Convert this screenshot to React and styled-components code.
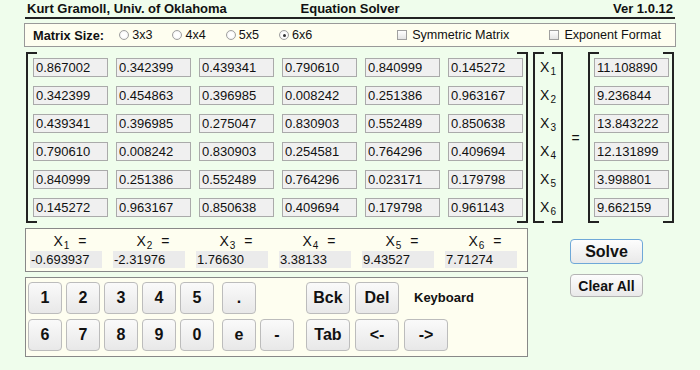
import React from 'react'
import styled, { createGlobalStyle } from 'styled-components'

const Global = createGlobalStyle`
  html, body {
    margin: 0;
    padding: 0;
    background: #effdec;
  }
  body {
    font-family: "Liberation Sans", Arial, sans-serif;
    color: #111;
  }
`;

const Page = styled.div`
  width: 650px;
  height: 370px;
  padding: 0 25px;
  display: flex;
  flex-direction: column;
`;

const Header = styled.div`
  display: grid;
  grid-template-columns: 1fr auto 1fr;
  align-items: center;
  height: 17px;
  padding: 0 2px;
  border-bottom: 2px solid #222;
  font-size: 13px;
  font-weight: bold;
  span:last-child { text-align: right; }
`;

const Options = styled.div`
  margin: 4px -1px 0 -1px;
  height: 22px;
  border: 1px solid #999;
  background: #fefef0;
  display: flex;
  align-items: center;
  padding: 0 14px 0 8px;
  font-size: 12.6px;
`;

const Label = styled.span`
  font-weight: bold;
  font-size: 12.8px;
  margin-right: 15px;
`;

const Choice = styled.span`
  display: flex;
  align-items: center;
  gap: 3px;
  margin-right: ${p => p.$gap ?? 20}px;
  margin-left: ${p => p.$push ? 'auto' : '0'};
`;

const Radio = styled.span`
  width: 8px;
  height: 8px;
  border-radius: 50%;
  border: 1px solid #a0a0a0;
  background: radial-gradient(circle, #fff 40%, #e6e6e6);
  display: flex;
  align-items: center;
  justify-content: center;
  &::after {
    content: '';
    width: 3px;
    height: 3px;
    border-radius: 50%;
    background: ${p => p.$on ? '#333' : 'transparent'};
  }
`;

const Check = styled.span`
  width: 8px;
  height: 8px;
  border: 1px solid #a0a0a0;
  background: linear-gradient(#fff, #e4e4e4);
  margin-right: 2px;
`;

const MatrixRow = styled.div`
  display: flex;
  margin-top: 5px;
  height: 171px;
`;

const Bracket = styled.div`
  position: relative;
  padding: ${p => p.$pad || '6px 5px 6px 7px'};
  width: ${p => p.$w}px;
  box-sizing: border-box;
  margin-left: ${p => p.$ml || 0}px;
  &::before, &::after {
    content: '';
    position: absolute;
    top: 0;
    bottom: 0;
    width: 9px;
    border: 2px solid #222;
  }
  &::before { left: 0; border-right: none; }
  &::after { right: 0; border-left: none; }
`;

const Grid = styled.div`
  display: grid;
  grid-template-columns: repeat(${p => p.$cols}, 75px);
  grid-auto-rows: 19px;
  column-gap: 8px;
  row-gap: 9px;
`;

const Cell = styled.input`
  box-sizing: border-box;
  width: 75px;
  height: 19px;
  margin: 0;
  padding: 0 2px;
  border: 1px solid #aaa;
  background: #f0f0f0;
  font-family: "Liberation Sans", Arial, sans-serif;
  font-size: 13px;
  color: #111;
  outline: none;
`;

const VarList = styled.div`
  display: grid;
  grid-auto-rows: 19px;
  row-gap: 9px;
  justify-items: center;
  align-items: center;
`;

const Var = styled.span`
  font-size: 14px;
  sub {
    font-size: 10px;
    vertical-align: -3px;
    margin-left: 1px;
  }
`;

const Equals = styled.div`
  width: 25px;
  display: flex;
  align-items: center;
  justify-content: center;
  font-size: 14px;
`;

const Bottom = styled.div`
  display: flex;
  margin-top: 5px;
`;

const LeftCol = styled.div`
  width: 503px;
  display: flex;
  flex-direction: column;
  gap: 5px;
`;

const Panel = styled.div`
  border: 1px solid #888;
  background: #fefef0;
  box-sizing: border-box;
  height: ${p => p.$h}px;
  padding: ${p => p.$pad};
`;

const Results = styled.div`
  display: grid;
  grid-template-columns: repeat(6, 72px);
  column-gap: 11px;
`;

const ResultCell = styled.div`
  display: flex;
  flex-direction: column;
`;

const ResultLabel = styled.div`
  height: 19px;
  line-height: 19px;
  text-align: center;
  font-size: 14px;
  padding-left: 8px;
  white-space: nowrap;
  sub {
    font-size: 10px;
    vertical-align: -3px;
    margin: 0 9px 0 1px;
  }
`;

const ResultValue = styled.div`
  height: 17px;
  background: #ebebeb;
  font-size: 13px;
  line-height: 17px;
  padding-left: 1px;
`;

const KeyRows = styled.div`
  display: flex;
  flex-direction: column;
  gap: 5px;
`;

const KeyRow = styled.div`
  display: flex;
  align-items: center;
`;

const KeyGroup = styled.div`
  display: flex;
  gap: ${p => p.$gap || 4}px;
  margin-left: ${p => p.$ml || 0}px;
  align-items: center;
`;

const Key = styled.button`
  box-sizing: border-box;
  width: ${p => p.$w || 34}px;
  height: 32px;
  margin: 0;
  padding: 0;
  border: 1px solid #bcbcbc;
  border-radius: 4px;
  background: linear-gradient(#fafafa, #e8e8e8);
  font-family: "Liberation Sans", Arial, sans-serif;
  font-weight: bold;
  font-size: 16px;
  color: #111;
  visibility: ${p => p.$blank ? 'hidden' : 'visible'};
`;

const KeyLabel = styled.span`
  font-size: 13px;
  font-weight: bold;
  margin-left: 10px;
  margin-top: -2px;
`;

const Actions = styled.div`
  display: flex;
  flex-direction: column;
  gap: 10px;
  margin-left: 42px;
  padding-top: 11px;
`;

const Action = styled.button`
  box-sizing: border-box;
  width: 73px;
  height: ${p => p.$primary ? 25 : 23}px;
  border: 1px solid ${p => p.$primary ? '#6fa8d8' : '#b4b4b4'};
  border-radius: 4px;
  background: linear-gradient(#fdfdfd, #e9e9e9);
  font-family: "Liberation Sans", Arial, sans-serif;
  font-weight: bold;
  font-size: ${p => p.$primary ? 16 : 14}px;
  color: #111;
  padding: 0;
`;

const matrix = [
  ['0.867002', '0.342399', '0.439341', '0.790610', '0.840999', '0.145272'],
  ['0.342399', '0.454863', '0.396985', '0.008242', '0.251386', '0.963167'],
  ['0.439341', '0.396985', '0.275047', '0.830903', '0.552489', '0.850638'],
  ['0.790610', '0.008242', '0.830903', '0.254581', '0.764296', '0.409694'],
  ['0.840999', '0.251386', '0.552489', '0.764296', '0.023171', '0.179798'],
  ['0.145272', '0.963167', '0.850638', '0.409694', '0.179798', '0.961143'],
];
const rhs = ['11.108890', '9.236844', '13.843222', '12.131899', '3.998801', '9.662159'];
const answers = ['-0.693937', '-2.31976', '1.76630', '3.38133', '9.43527', '7.71274'];

export default function App() {
  return (
    <>
      <Global />
      <Page>
        <Header>
          <span>Kurt Gramoll, Univ. of Oklahoma</span>
          <span>Equation Solver</span>
          <span>Ver 1.0.12</span>
        </Header>

        <Options>
          <Label>Matrix Size:</Label>
          {['3x3', '4x4', '5x5', '6x6'].map(s => (
            <Choice key={s}>
              <Radio $on={s === '6x6'} />
              {s}
            </Choice>
          ))}
          <Choice $push $gap={40}>
            <Check />
            Symmetric Matrix
          </Choice>
          <Choice $gap={0}>
            <Check />
            Exponent Format
          </Choice>
        </Options>

        <MatrixRow>
          <Bracket $w={502} $ml={1}>
            <Grid $cols={6}>
              {matrix.flat().map((v, i) => (
                <Cell key={i} readOnly value={v} />
              ))}
            </Grid>
          </Bracket>
          <Bracket $w={30} $ml={5} $pad="6px 0">
            <VarList>
              {[1, 2, 3, 4, 5, 6].map(n => (
                <Var key={n}>X<sub>{n}</sub></Var>
              ))}
            </VarList>
          </Bracket>
          <Equals>=</Equals>
          <Bracket $w={86} $pad="6px 5px 6px 6px">
            <Grid $cols={1}>
              {rhs.map((v, i) => (
                <Cell key={i} readOnly value={v} />
              ))}
            </Grid>
          </Bracket>
        </MatrixRow>

        <Bottom>
          <LeftCol>
            <Panel $h={44} $pad="3px 0 0 4px">
              <Results>
                {answers.map((v, i) => (
                  <ResultCell key={i}>
                    <ResultLabel>X<sub>{i + 1}</sub>=</ResultLabel>
                    <ResultValue>{v}</ResultValue>
                  </ResultCell>
                ))}
              </Results>
            </Panel>
            <Panel $h={80} $pad="4px 2px">
              <KeyRows>
                <KeyRow>
                  <KeyGroup>
                    {['1', '2', '3', '4', '5'].map(k => <Key key={k}>{k}</Key>)}
                  </KeyGroup>
                  <KeyGroup $ml={8}>
                    <Key>.</Key>
                    <Key $blank />
                  </KeyGroup>
                  <KeyGroup $ml={12} $gap={5}>
                    <Key $w={44}>Bck</Key>
                    <Key $w={44}>Del</Key>
                    <KeyLabel>Keyboard</KeyLabel>
                  </KeyGroup>
                </KeyRow>
                <KeyRow>
                  <KeyGroup>
                    {['6', '7', '8', '9', '0'].map(k => <Key key={k}>{k}</Key>)}
                  </KeyGroup>
                  <KeyGroup $ml={8}>
                    <Key>e</Key>
                    <Key>-</Key>
                  </KeyGroup>
                  <KeyGroup $ml={12} $gap={5}>
                    <Key $w={44}>Tab</Key>
                    <Key $w={44}>&lt;-</Key>
                    <Key $w={44}>-&gt;</Key>
                  </KeyGroup>
                </KeyRow>
              </KeyRows>
            </Panel>
          </LeftCol>
          <Actions>
            <Action $primary>Solve</Action>
            <Action>Clear All</Action>
          </Actions>
        </Bottom>
      </Page>
    </>
  );
}
